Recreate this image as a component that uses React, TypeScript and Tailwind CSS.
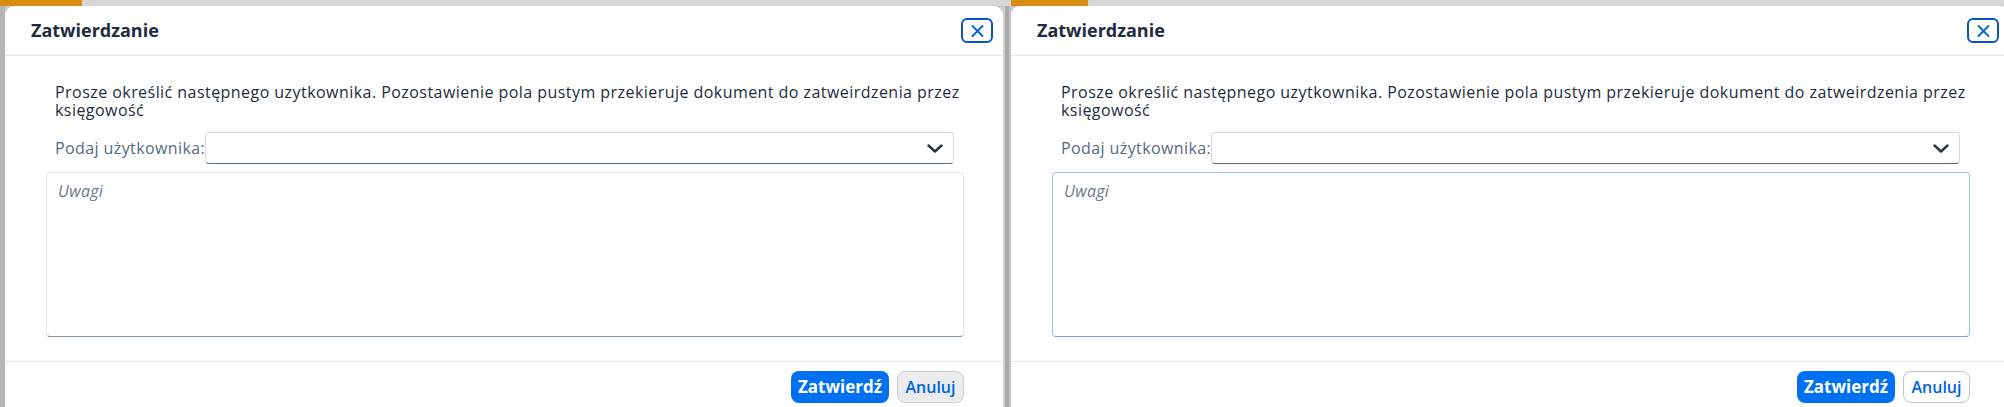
import React from "react";

function CloseButton() {
  return (
    <button className="w-[32px] h-[25px] border-2 border-[#0a52c9] rounded-[6px] flex items-center justify-center bg-white">
      <svg width="13" height="12" viewBox="0 0 13 12" fill="none">
        <path d="M1.5 1 L11.5 11 M11.5 1 L1.5 11" stroke="#0064d9" strokeWidth="1.8" strokeLinecap="round" />
      </svg>
    </button>
  );
}

function Dialog({ focused }: { focused: boolean }) {
  return (
    <div className="w-[998px] shrink-0 h-[401px] bg-white rounded-t-[9px] flex flex-col overflow-hidden">
      <div className="h-[50px] shrink-0 border-b border-[#e5e5e5] flex items-center justify-between pl-[26px] pr-[10px]">
        <span className="text-[18px] font-bold text-[#1d2d3e]">Zatwierdzanie</span>
        <CloseButton />
      </div>
      <div className="h-[306px] shrink-0 border-b border-[#e5e5e5] pl-[41px] pr-[39px] pt-[27px] flex flex-col">
        <div className="pl-[9px] text-[16px] leading-[18px] tracking-[0.45px] text-[#1d2d3e]">
          <div className="whitespace-nowrap">
            Prosze określić następnego uzytkownika. Pozostawienie pola pustym przekieruje dokument do zatweirdzenia przez
          </div>
          <div>księgowość</div>
        </div>
        <div className="mt-[13px] pl-[9px] pr-[10px] flex items-center">
          <span className="text-[16px] tracking-[0.4px] text-[#556b82] whitespace-nowrap">Podaj użytkownika:</span>
          <div className="flex-1 h-[32px] border border-[#d5dadd] border-b-[#556b82] rounded-[4px] bg-white flex items-center justify-end pr-[10px]">
            <svg width="16" height="9" viewBox="0 0 16 9" fill="none">
              <path d="M1.5 1.5 L8 7.5 L14.5 1.5" stroke="#2a3542" strokeWidth="2.4" strokeLinecap="round" strokeLinejoin="round" />
            </svg>
          </div>
        </div>
        <div
          className={
            focused
              ? "mt-[8px] h-[165px] border border-[#9cc3f7] border-b-[#6aa5f0] rounded-[4px] bg-white px-[11px] pt-[6px]"
              : "mt-[8px] h-[165px] border border-[#e1e4e8] border-b-[#8396a8] rounded-[4px] bg-white px-[11px] pt-[6px]"
          }
        >
          <span className="text-[16px] italic tracking-[0.3px] text-[#6a7b8c]">Uwagi</span>
        </div>
      </div>
      <div className="flex justify-end gap-[8px] pr-[39px] pt-[9px]">
        <button className="h-[32px] w-[98px] rounded-[8px] bg-[#0070f2] text-white text-[17px] font-bold flex items-center justify-center">
          Zatwierdź
        </button>
        <button
          className={
            focused
              ? "h-[32px] w-[67px] rounded-[8px] bg-white border border-[#bcc3ca] text-[#0064d9] text-[16px] font-semibold flex items-center justify-center"
              : "h-[32px] w-[67px] rounded-[8px] bg-[#eaecee] border border-[#c9ced3] text-[#0064d9] text-[16px] font-semibold flex items-center justify-center"
          }
        >
          Anuluj
        </button>
      </div>
    </div>
  );
}

export default function App() {
  return (
    <div
      className="w-[2004px] h-[407px] overflow-hidden bg-[#c9c9c9] flex flex-col"
      style={{ fontFamily: '"Open Sans", "Noto Sans", sans-serif' }}
    >
      <div className="h-[6px] shrink-0 flex bg-[#d6d6d6]">
        <div className="w-[82px] bg-[#d98c12]" />
        <div className="w-[929px]" />
        <div className="w-[77px] bg-[#d98c12]" />
      </div>
      <div className="flex flex-1">
        <div className="w-[5px] shrink-0 bg-[#b6b6b6]" />
        <Dialog focused={false} />
        <div className="w-[8px] shrink-0 flex">
          <div className="w-[2px] bg-[#d0d0d0]" />
          <div className="w-[4px] bg-[#a9a9a9]" />
          <div className="w-[2px] bg-[#c4c4c4]" />
        </div>
        <Dialog focused={true} />
      </div>
    </div>
  );
}
